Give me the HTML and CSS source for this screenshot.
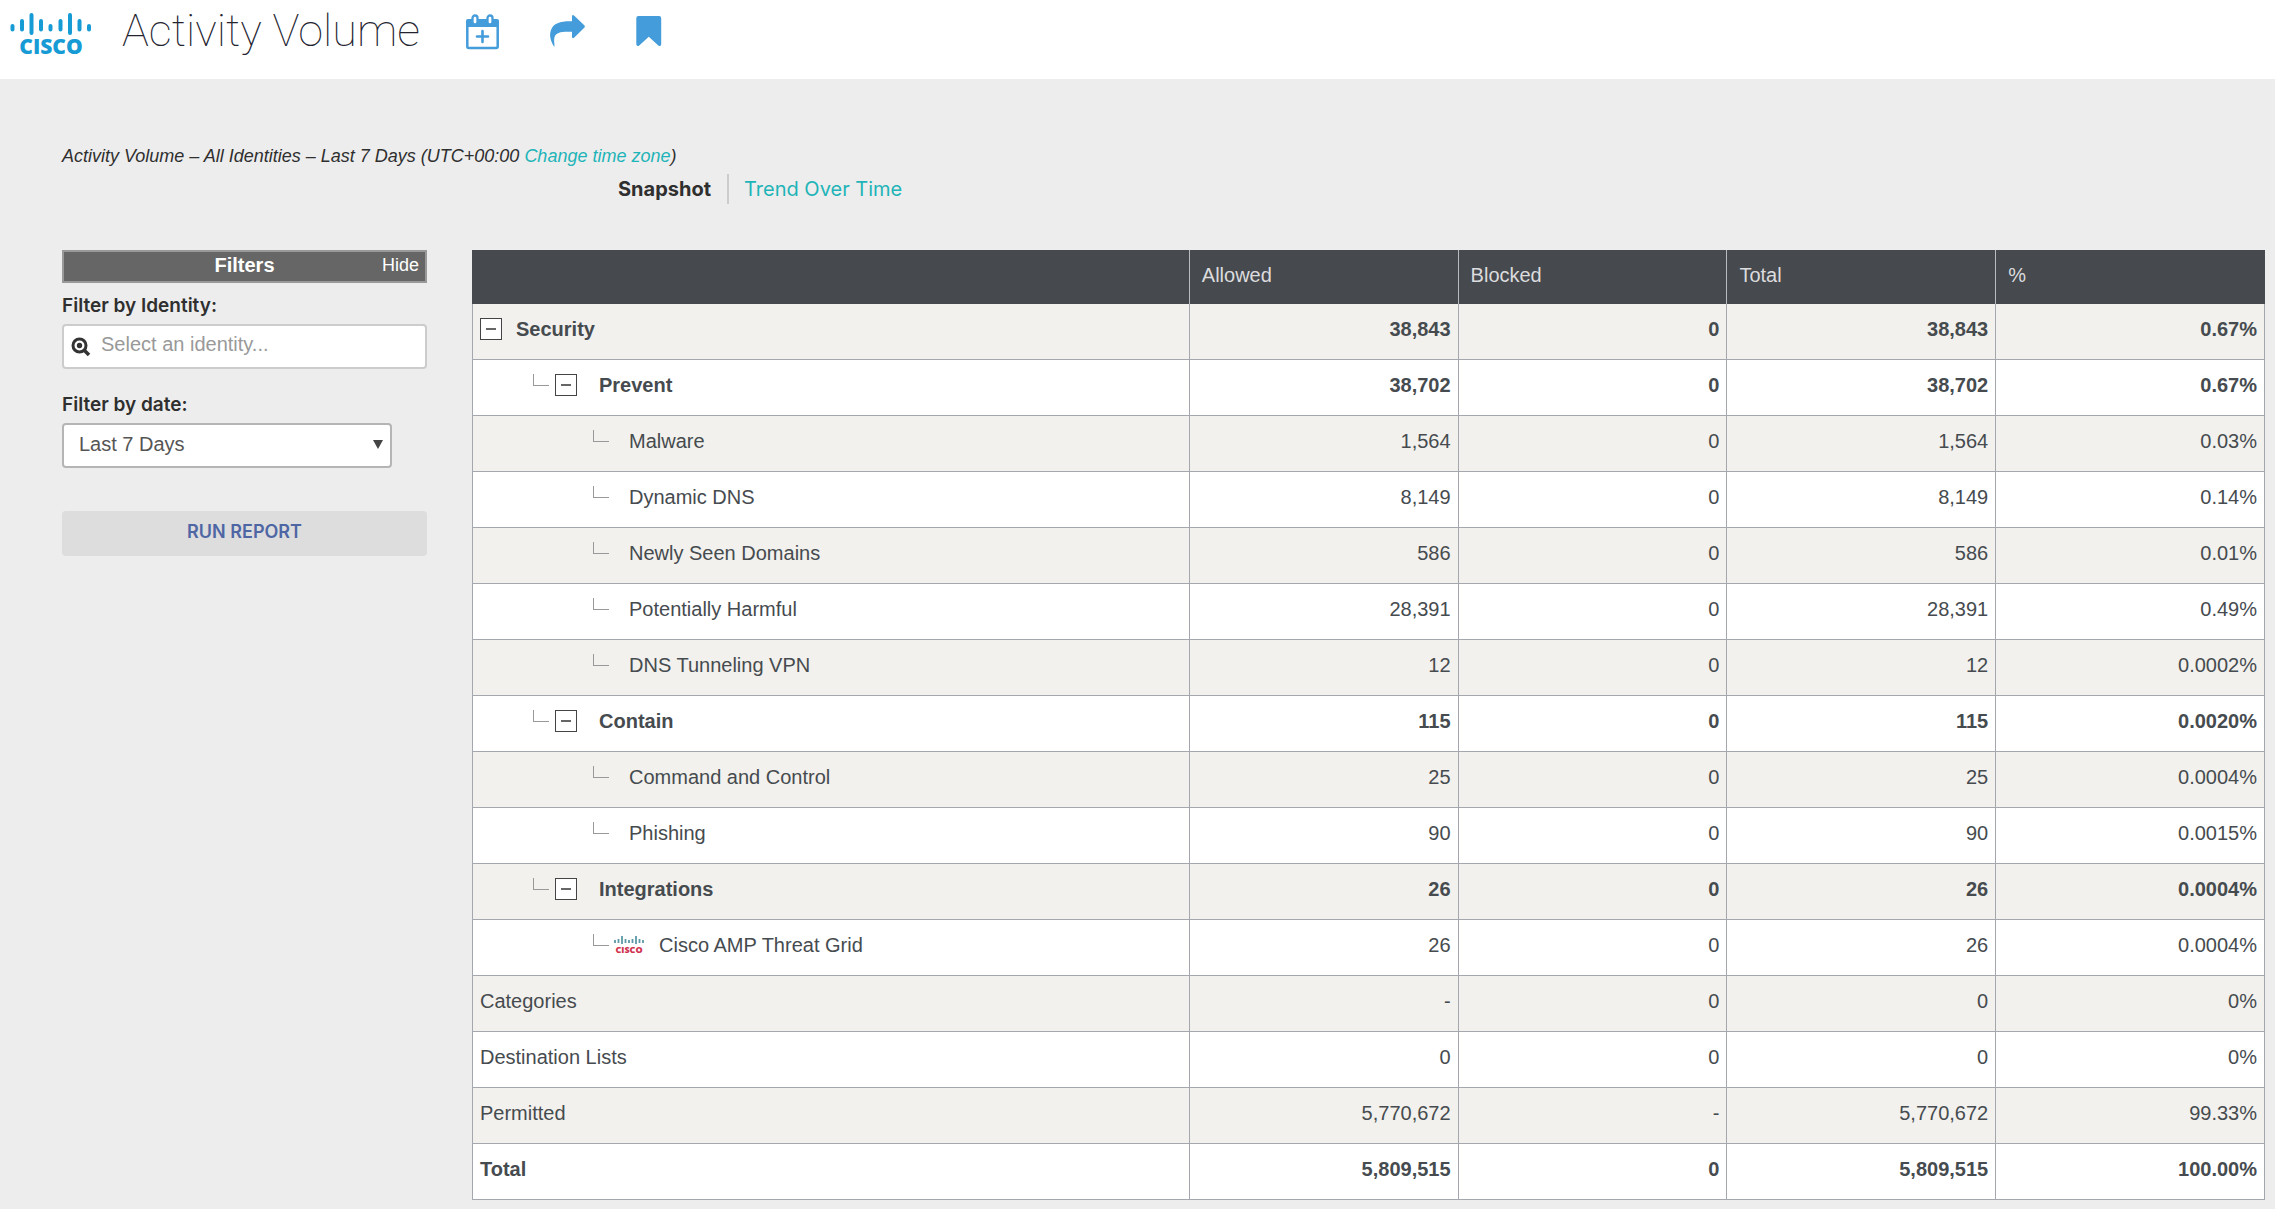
FILE: index.html
```html
<!DOCTYPE html>
<html lang="en">
<head>
  <meta charset="UTF-8" />
  <meta name="viewport" content="width=device-width, initial-scale=1.0" />
  <title>Activity Volume</title>
  <link rel="stylesheet" href="styles.css">
</head>
<body>
  <header class="topbar">
    <a href="#" class="logo" aria-label="Cisco home">
      <svg width="84" height="56" viewBox="0 0 84 56">
        <path d="M3.500 14v3.500M13 9v8.500M22.500 3v18M32 9v8.500M41.500 14v3.500M51.500 9v8.500M61 3v18M70.500 9v8.500M80 14v3.500" fill="none" stroke="#169bd5" stroke-width="4" stroke-linecap="round"/>
        <text x="42" y="42" class="logo-text">CISCO</text>
      </svg>
    </a>
    <h1>Activity Volume</h1>
    <div class="actions">
      <button class="icon-btn" aria-label="Schedule">
        <svg width="33" height="36" viewBox="0 0 33 36">
          <rect x="1.300" y="7" width="30.400" height="27" rx="1.500" fill="#fff" stroke="#449cda" stroke-width="2.500"/>
          <path d="M0 13V7q0-2 2-2h29q2 0 2 2v6z" fill="#449cda"/>
          <rect x="6.500" y="1.500" width="5" height="9" rx="2.500" fill="#fff" stroke="#449cda" stroke-width="2.300"/>
          <rect x="21.500" y="1.500" width="5" height="9" rx="2.500" fill="#fff" stroke="#449cda" stroke-width="2.300"/>
          <path d="M16.500 17v11M11 22.500h11" stroke="#449cda" stroke-width="2.600" stroke-linecap="round"/>
        </svg>
      </button>
      <button class="icon-btn" aria-label="Share">
        <svg width="37" height="36" viewBox="0 0 37 36">
          <path d="M5 32.500C1.500 27 0 21 2 16 4.500 9 12 7 23 7.300V2q.5-1.800 2-.6L35.500 11.500q.8 1 0 2L25 23.800q-1.500 1-2-.6V17.800C14 17.500 6.500 17.500 5.300 24 4.800 27 5.600 29.500 5.400 32.300 5.400 33 5.200 33 5 32.500z" fill="#449cda"/>
        </svg>
      </button>
      <button class="icon-btn" aria-label="Bookmark">
        <svg width="26" height="36" viewBox="0 0 26 36">
          <path d="M2.500 2h20.500q2.200 0 2.200 2.200V30q0 3-2.600 1.700L12.800 22.800 3.200 31.500Q.5 33 .3 30V4.200Q.3 2 2.500 2z" fill="#449cda"/>
        </svg>
      </button>
    </div>
  </header>

  <main>
    <p class="summary">Activity Volume – All Identities – Last 7 Days (UTC+00:00 <a href="#">Change time zone</a>)</p>
    <nav class="tabs">
      <span class="tab current">Snapshot</span>
      <a href="#" class="tab">Trend Over Time</a>
    </nav>

    <div class="columns">
      <form class="filters">
        <div class="filters-head">
          <h2>Filters</h2>
          <button type="button" class="hide-btn">Hide</button>
        </div>

        <label for="identity">Filter by Identity:</label>
        <div class="search">
          <svg width="20" height="20" viewBox="0 0 20 20">
            <circle cx="8.500" cy="8.500" r="6.500" fill="none" stroke="#333" stroke-width="3"/>
            <circle cx="8.500" cy="8.500" r="2.700" fill="#333"/>
            <path d="M13.500 13.500l4.500 4.500" stroke="#333" stroke-width="3.500"/>
          </svg>
          <input type="text" id="identity" placeholder="Select an identity...">
        </div>

        <label for="date">Filter by date:</label>
        <div class="select">
          <select id="date">
            <option>Last 7 Days</option>
            <option>Last 24 Hours</option>
            <option>Last 30 Days</option>
          </select>
        </div>

        <button type="button" class="run-btn">RUN REPORT</button>
      </form>

      <table class="report">
        <thead>
          <tr><th class="name"></th><th>Allowed</th><th>Blocked</th><th>Total</th><th>%</th></tr>
        </thead>
        <tbody>
          <tr class="strong"><td><div class="node"><button class="toggle" aria-label="Collapse Security"></button>Security</div></td><td>38,843</td><td>0</td><td>38,843</td><td>0.67%</td></tr>
          <tr class="strong"><td><div class="node lvl2"><i class="branch"></i><button class="toggle" aria-label="Collapse Prevent"></button>Prevent</div></td><td>38,702</td><td>0</td><td>38,702</td><td>0.67%</td></tr>
          <tr><td><div class="node lvl3"><i class="branch"></i>Malware</div></td><td>1,564</td><td>0</td><td>1,564</td><td>0.03%</td></tr>
          <tr><td><div class="node lvl3"><i class="branch"></i>Dynamic DNS</div></td><td>8,149</td><td>0</td><td>8,149</td><td>0.14%</td></tr>
          <tr><td><div class="node lvl3"><i class="branch"></i>Newly Seen Domains</div></td><td>586</td><td>0</td><td>586</td><td>0.01%</td></tr>
          <tr><td><div class="node lvl3"><i class="branch"></i>Potentially Harmful</div></td><td>28,391</td><td>0</td><td>28,391</td><td>0.49%</td></tr>
          <tr><td><div class="node lvl3"><i class="branch"></i>DNS Tunneling VPN</div></td><td>12</td><td>0</td><td>12</td><td>0.0002%</td></tr>
          <tr class="strong"><td><div class="node lvl2"><i class="branch"></i><button class="toggle" aria-label="Collapse Contain"></button>Contain</div></td><td>115</td><td>0</td><td>115</td><td>0.0020%</td></tr>
          <tr><td><div class="node lvl3"><i class="branch"></i>Command and Control</div></td><td>25</td><td>0</td><td>25</td><td>0.0004%</td></tr>
          <tr><td><div class="node lvl3"><i class="branch"></i>Phishing</div></td><td>90</td><td>0</td><td>90</td><td>0.0015%</td></tr>
          <tr class="strong"><td><div class="node lvl2"><i class="branch"></i><button class="toggle" aria-label="Collapse Integrations"></button>Integrations</div></td><td>26</td><td>0</td><td>26</td><td>0.0004%</td></tr>
          <tr>
            <td>
              <div class="node lvl3 with-logo"><i class="branch"></i>
                <svg class="mini-logo" width="32" height="24" viewBox="0 0 32 24">
                  <path d="M2 7v3M5.500 6v4M9 3v8M12.500 6v4M16 7v3M19.500 6v4M23 3v8M26.500 6v4M30 7v3" stroke="#5d98a6" stroke-width="1.800"/>
                  <text x="16" y="20" class="mini-text">CISCO</text>
                </svg>Cisco AMP Threat Grid</div>
            </td>
            <td>26</td><td>0</td><td>26</td><td>0.0004%</td>
          </tr>
          <tr><td>Categories</td><td>-</td><td>0</td><td>0</td><td>0%</td></tr>
          <tr><td>Destination Lists</td><td>0</td><td>0</td><td>0</td><td>0%</td></tr>
          <tr><td>Permitted</td><td>5,770,672</td><td>-</td><td>5,770,672</td><td>99.33%</td></tr>
          <tr class="strong"><td>Total</td><td>5,809,515</td><td>0</td><td>5,809,515</td><td>100.00%</td></tr>
        </tbody>
      </table>
    </div>
  </main>
</body>
</html>
```
FILE: styles.css
```css
:root {
  --page: #ededed;
  --text: #464b4f;
  --dark: #46494d;
  --line: #a4a7ad;
  --stripe: #f2f1ed;
  --link: #1eb4b8;
  --blue: #169bd5;
}

* { box-sizing: border-box; }
body {
  margin: 0;
  background: var(--page);
  color: #2f2f2f;
  font-family: "Liberation Sans", Arial, sans-serif;
  font-size: 20px;
}
button, input, select { font-family: inherit; }
button { cursor: pointer; }
a { color: var(--link); text-decoration: none; }

/* top bar */
.topbar { display: flex; align-items: flex-start; height: 79px; padding: 0 9px; background: #fff; }
.logo { display: block; padding-top: 12px; }
.logo svg { display: block; }
.logo-text { font-family: "Open Sans", sans-serif; font-size: 21px; font-weight: 800; fill: var(--blue); text-anchor: middle; }
h1 { margin: 0 0 0 29px; font-family: Roboto, sans-serif; font-size: 45px; font-weight: 100; line-height: 62px; color: #23232f; white-space: nowrap; }
.actions { display: flex; gap: 50px; margin-left: 46px; padding-top: 14px; }
.icon-btn { padding: 0; border: 0; background: none; }
.icon-btn svg { display: block; }

main { padding: 65px 10px 8px 62px; }
.summary { margin: 0; font-size: 18px; font-style: italic; line-height: 24px; }
.tabs { display: flex; align-items: center; margin-left: 556px; padding-top: 6px; font-family: Inter, sans-serif; line-height: 30px; }
.tab.current { font-weight: 700; padding-right: 16px; margin-right: 15px; border-right: 2px solid #ccc; }

.columns { display: flex; align-items: flex-start; gap: 45px; margin-top: 46px; }

/* filters */
.filters { flex: none; width: 365px; }
.filters-head { display: grid; grid-template-columns: 1fr auto 1fr; align-items: center; height: 33px; margin-bottom: 11px; padding: 0 6px 2px; background: #666; border: 2px solid #999; color: #fff; }
.filters-head h2 { grid-column: 2; margin: 0; font-size: 20px; font-weight: 700; }
.hide-btn { justify-self: end; padding: 0; border: 0; background: none; color: #fff; font-size: 18px; }
.filters label { display: block; font-family: Inter, sans-serif; font-size: 19px; font-weight: 600; line-height: 24px; margin-bottom: 6px; }
.search { display: flex; align-items: center; gap: 10px; height: 45px; margin-bottom: 24px; padding: 0 7px; background: #fff; border: 2px solid #ccc; border-radius: 4px; }
.search svg { flex: none; }
.search input { flex: 1; min-width: 0; padding: 0 0 4px; border: 0; outline: 0; background: none; font-size: 20px; }
.search input::placeholder { color: #999; }
.select { position: relative; width: 330px; margin-bottom: 43px; }
.select::after { content: ""; position: absolute; right: 9px; top: 17px; border: 5px solid transparent; border-top: 9px solid #444; border-bottom: 0; pointer-events: none; }
.select select { display: block; width: 100%; height: 45px; padding: 0 30px 4px 15px; appearance: none; background: #fff; border: 2px solid #b5b5b5; border-radius: 4px; color: #555; font-size: 20px; }
.run-btn { display: block; width: 100%; height: 45px; padding: 0 0 4px; background: #ddd; border: 0; border-radius: 4px; color: #4f66a5; font-family: Inter, sans-serif; font-size: 18px; font-weight: 600; }

/* report table */
.report { flex: 1; table-layout: fixed; border-collapse: collapse; background: #fff; color: var(--text); line-height: 24px; }
.report th { width: 15%; height: 54px; padding: 0 12px 4px; background: var(--dark); border-left: 1px solid #b9bbbe; color: #dcdcde; font-weight: 400; text-align: left; }
.report th.name { width: 40%; border-left-color: var(--dark); }
.report th:last-child { border-right: 1px solid var(--dark); }
.report td { height: 56px; padding: 0 7px 4px; border: 1px solid var(--line); text-align: right; }
.report tbody tr:first-child td { height: 55px; border-top: 0; }
.report td:first-child { text-align: left; }
.report tbody tr:nth-child(odd) { background: var(--stripe); }
.strong td { font-weight: 700; }

.node { display: flex; align-items: center; gap: 14px; }
.node.lvl2 { gap: 22px; padding-left: 53px; }
.node.lvl3 { gap: 20px; padding-left: 113px; }
.node.with-logo { gap: 14px; }
.toggle { flex: none; display: grid; place-items: center; width: 22px; height: 22px; padding: 0; background: #fff; border: 1px solid #444; }
.toggle::before { content: ""; width: 10px; height: 2px; background: #666; }
.branch { flex: none; width: 16px; height: 12px; margin-bottom: 10px; border-left: 1px solid #999; border-bottom: 1px solid #999; }
.lvl2 .branch { margin-right: -16px; }
.with-logo .branch { margin-right: -10px; }
.mini-text { font-family: "Open Sans", sans-serif; font-size: 9px; font-weight: 800; fill: #d0314f; text-anchor: middle; }
```
